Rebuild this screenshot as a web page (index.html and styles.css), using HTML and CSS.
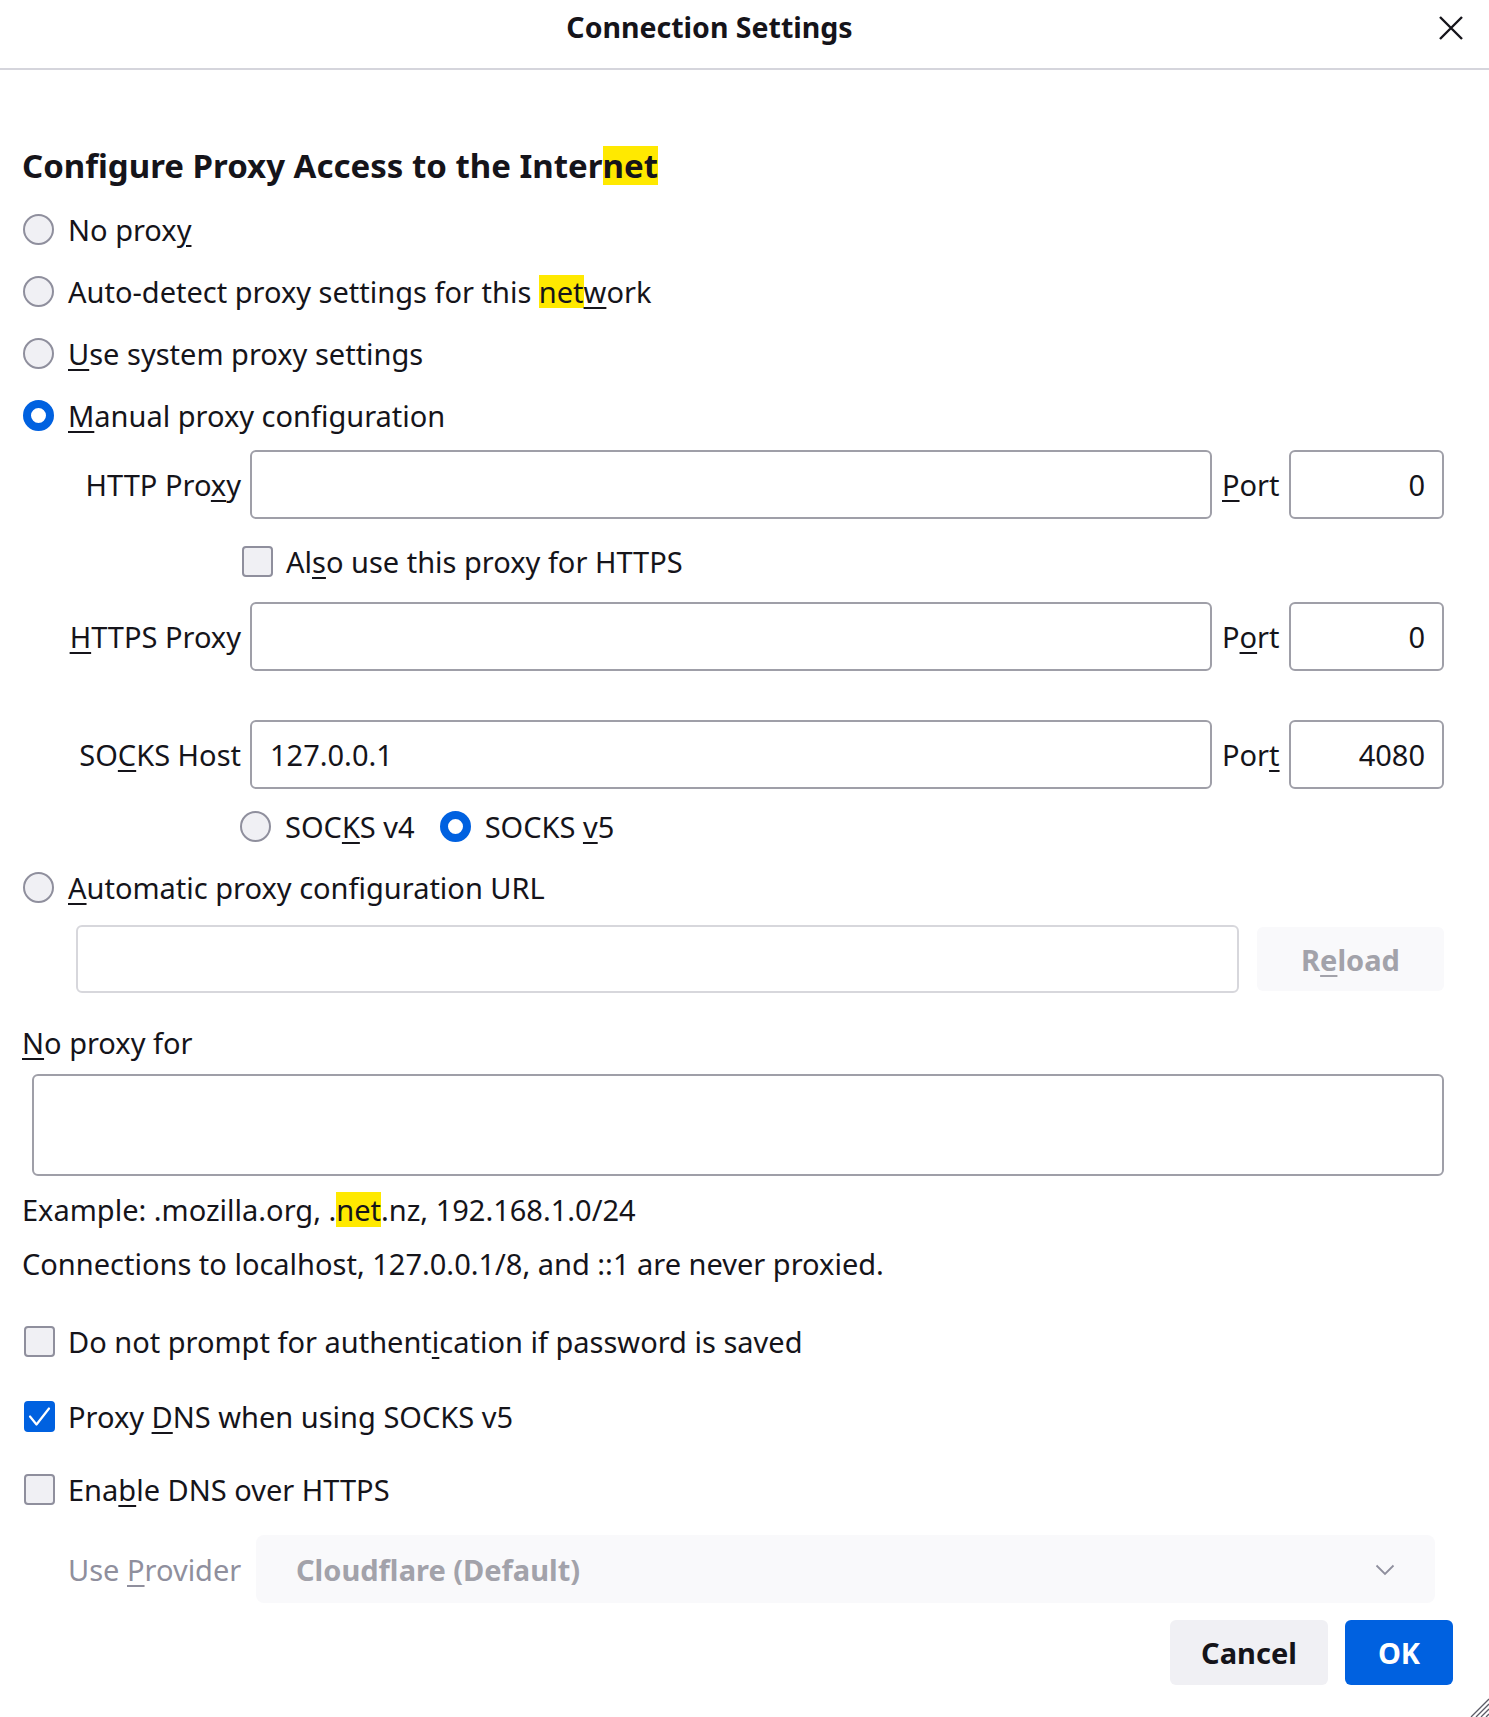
FILE: index.html
```html
<!DOCTYPE html>
<html lang="en">
<head>
<meta charset="utf-8">
<title>Connection Settings</title>
<link rel="stylesheet" href="styles.css">
</head>
<body>
<div class="dialog">
  <header class="titlebar">
    <div class="title">Connection Settings</div>
    <svg class="close" width="26" height="26" viewBox="0 0 26 26"><path d="M2 2 L24 24 M24 2 L2 24" stroke="#15141a" stroke-width="2.4" fill="none"/></svg>
  </header>

  <main class="content">
    <h2 class="heading">Configure Proxy Access to the Inter<mark class="hl">net</mark></h2>

    <div class="row radio-row"><span class="radio"></span><span class="lbl">No prox<u>y</u></span></div>
    <div class="row radio-row"><span class="radio"></span><span class="lbl">Auto-detect proxy settings for this <mark class="hl">net</mark><u>w</u>ork</span></div>
    <div class="row radio-row"><span class="radio"></span><span class="lbl"><u>U</u>se system proxy settings</span></div>
    <div class="row radio-row"><span class="radio checked"></span><span class="lbl"><u>M</u>anual proxy configuration</span></div>

    <div class="proxy-row first">
      <span class="plabel">HTTP Pro<u>x</u>y</span>
      <div class="field host"></div>
      <span class="portlbl"><u>P</u>ort</span>
      <div class="field port">0</div>
    </div>

    <div class="row also-row"><span class="check"></span><span class="lbl">Al<u>s</u>o use this proxy for HTTPS</span></div>

    <div class="proxy-row https">
      <span class="plabel"><u>H</u>TTPS Proxy</span>
      <div class="field host"></div>
      <span class="portlbl">P<u>o</u>rt</span>
      <div class="field port">0</div>
    </div>

    <div class="proxy-row socks">
      <span class="plabel">SO<u>C</u>KS Host</span>
      <div class="field host">127.0.0.1</div>
      <span class="portlbl">Por<u>t</u></span>
      <div class="field port">4080</div>
    </div>

    <div class="row version-row">
      <span class="radio"></span><span class="lbl v4">SOC<u>K</u>S v4</span>
      <span class="radio checked"></span><span class="lbl">SOCKS <u>v</u>5</span>
    </div>

    <div class="row auto-row"><span class="radio"></span><span class="lbl"><u>A</u>utomatic proxy configuration URL</span></div>

    <div class="url-row">
      <div class="field url disabled"></div>
      <div class="btn reload">R<u>e</u>load</div>
    </div>

    <div class="row noproxy-lbl"><span><u>N</u>o proxy for</span></div>
    <div class="textarea"></div>

    <div class="row note first-note"><span>Example: .mozilla.org, .<mark class="hl">net</mark>.nz, 192.168.1.0/24</span></div>
    <div class="row note"><span>Connections to localhost, 127.0.0.1/8, and ::1 are never proxied.</span></div>

    <div class="row cb-row prompt"><span class="check"></span><span class="lbl">Do not prompt for authent<u>i</u>cation if password is saved</span></div>
    <div class="row cb-row dns"><span class="check checked"><svg width="31" height="31" viewBox="0 0 31 31"><path d="M6 15.5 L12.5 23.5 L25 7.5" stroke="#fff" stroke-width="2.2" fill="none" stroke-linecap="round" stroke-linejoin="round"/></svg></span><span class="lbl">Proxy <u>D</u>NS when using SOCKS v5</span></div>
    <div class="row cb-row doh"><span class="check"></span><span class="lbl">Ena<u>b</u>le DNS over HTTPS</span></div>

    <div class="provider-row">
      <span class="provlbl">Use <u>P</u>rovider</span>
      <div class="select">
        <span>Cloudflare (Default)</span>
        <svg class="chev" width="20" height="12" viewBox="0 0 20 12"><path d="M1.5 1.5 L10 10 L18.5 1.5" stroke="#8f8f9d" stroke-width="1.8" fill="none"/></svg>
      </div>
    </div>

    <div class="buttons">
      <div class="btn cancel">Cancel</div>
      <div class="btn ok">OK</div>
    </div>
  </main>

  <svg class="grip" width="20" height="20" viewBox="0 0 20 20"><path d="M20 2 L2 20 M20 7 L7 20 M20 12 L12 20 M20 17 L17 20" stroke="#5b5b66" stroke-width="1.3"/></svg>
</div>
</body>
</html>
```

FILE: styles.css
```css
html, body {
  margin: 0;
  padding: 0;
  background: #ffffff;
}

body {
  font-family: "Noto Sans", "DejaVu Sans", sans-serif;
  color: #15141a;
  font-size: 29px;
}

.dialog {
  position: relative;
  width: 1489px;
  height: 1717px;
  overflow: hidden;
}

u {
  text-decoration: underline;
  text-decoration-thickness: 2px;
  text-underline-offset: 4px;
}

.hl {
  display: inline-block;
  background: #ffe900;
  color: #15141a;
  line-height: 33px;
}

.titlebar {
  position: relative;
  height: 68px;
  border-bottom: 2px solid #d5d5dc;
  display: flex;
  align-items: center;
  justify-content: center;
  padding-right: 70px;
}

.title {
  font-weight: 700;
  font-size: 28.5px;
  margin-top: -14px;
}

.close {
  position: absolute;
  right: 25px;
  top: 15px;
}

.content {
  padding: 0 45px 0 22px;
}

.heading {
  margin: 0;
  padding-top: 62px;
  height: 66px;
  display: flex;
  align-items: center;
  font-size: 33px;
  font-weight: 700;
}

.heading .hl {
  line-height: 39px;
}

.row {
  display: flex;
  align-items: center;
}

.radio-row {
  height: 62px;
}

.radio {
  box-sizing: border-box;
  width: 31px;
  height: 31px;
  border-radius: 50%;
  border: 2px solid #8f8f9d;
  background: #f0f0f4;
  flex: none;
  margin-left: 1px;
  margin-right: 14px;
}

.radio.checked {
  border: 8px solid #0061e0;
  background: #ffffff;
}

.check {
  box-sizing: border-box;
  width: 31px;
  height: 31px;
  border-radius: 4px;
  border: 2px solid #8f8f9d;
  background: #f0f0f4;
  flex: none;
  margin-right: 13px;
  position: relative;
}

.check.checked {
  border-color: #0061e0;
  background: #0061e0;
}

.check.checked svg {
  position: absolute;
  left: -2px;
  top: -2px;
}

.proxy-row {
  display: flex;
  align-items: center;
  height: 69px;
}

.proxy-row.first {
  margin-top: 4px;
}

.proxy-row.https {
  margin-top: 10px;
}

.proxy-row.socks {
  margin-top: 49px;
}

.plabel {
  width: 219px;
  text-align: right;
  flex: none;
  margin-right: 9px;
  white-space: nowrap;
}

.field {
  box-sizing: border-box;
  height: 69px;
  border: 2px solid #9f9fa8;
  border-radius: 6px;
  background: #ffffff;
  display: flex;
  align-items: center;
}

.field.host {
  flex: 1;
  padding-left: 18px;
}

.portlbl {
  width: 57px;
  margin: 0 10px;
  flex: none;
}

.field.port {
  width: 155px;
  flex: none;
  justify-content: flex-end;
  padding-right: 17px;
}

.also-row {
  height: 62px;
  margin-top: 11px;
  padding-left: 220px;
}

.version-row {
  height: 62px;
  margin-top: 6px;
  padding-left: 217px;
}

.version-row .radio {
  margin-right: 14px;
}

.lbl.v4 {
  margin-right: 24px;
}

.auto-row {
  height: 60px;
}

.url-row {
  display: flex;
  align-items: center;
  margin-top: 8px;
  padding-left: 54px;
  height: 68px;
}

.field.url {
  flex: 1;
  height: 68px;
}

.field.disabled {
  border-color: #d7d7dc;
}

.btn {
  box-sizing: border-box;
  display: flex;
  align-items: center;
  justify-content: center;
  border-radius: 6px;
  font-weight: 700;
}

.reload {
  width: 187px;
  height: 64px;
  margin-left: 18px;
  background: #f9f9fb;
  color: #a2a2aa;
}

.noproxy-lbl {
  height: 62px;
  margin-top: 18px;
}

.textarea {
  box-sizing: border-box;
  margin: 1px 0 0 10px;
  height: 102px;
  border: 2px solid #9f9fa8;
  border-radius: 6px;
}

.note {
  height: 54px;
}

.note .hl {
  line-height: 35px;
}

.note.first-note {
  margin-top: 6px;
}

.cb-row {
  height: 62px;
  padding-left: 2px;
}

.cb-row.prompt {
  margin-top: 20px;
}

.cb-row.dns {
  margin-top: 13px;
}

.cb-row.doh {
  margin-top: 11px;
}

.provider-row {
  display: flex;
  align-items: center;
  margin-top: 15px;
  height: 68px;
  padding-left: 46px;
  padding-right: 9px;
}

.provlbl {
  color: #8f8f9d;
  width: 188px;
  flex: none;
  white-space: nowrap;
}

.select {
  flex: 1;
  height: 68px;
  border-radius: 8px;
  background: #f9f9fb;
  color: #a2a2aa;
  font-weight: 700;
  display: flex;
  align-items: center;
  justify-content: space-between;
  padding: 0 40px 0 40px;
}

.chev {
  margin-top: 2px;
}

.buttons {
  display: flex;
  justify-content: flex-end;
  gap: 17px;
  margin-top: 17px;
  margin-right: -9px;
}

.cancel {
  width: 158px;
  height: 65px;
  background: #f0f0f4;
  color: #15141a;
}

.ok {
  width: 108px;
  height: 65px;
  background: #0061e0;
  color: #ffffff;
}

.grip {
  position: absolute;
  right: 0;
  bottom: 0;
}
```
